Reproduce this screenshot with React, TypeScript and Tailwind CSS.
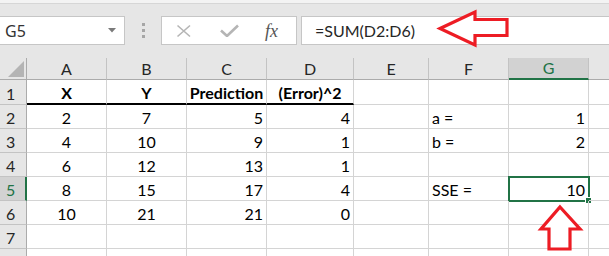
import React from "react";

const cols = ["A", "B", "C", "D", "E", "F", "G", ""];

// value, align per column A..H
type Cell = { v?: string; bold?: boolean };

const align = ["center", "center", "right", "right", "left", "left", "right", "left"];

const rows: Cell[][] = [
  [{ v: "X", bold: true }, { v: "Y", bold: true }, { v: "Prediction", bold: true }, { v: "(Error)^2", bold: true }, {}, {}, {}, {}],
  [{ v: "2" }, { v: "7" }, { v: "5" }, { v: "4" }, {}, { v: "a =" }, { v: "1" }, {}],
  [{ v: "4" }, { v: "10" }, { v: "9" }, { v: "1" }, {}, { v: "b =" }, { v: "2" }, {}],
  [{ v: "6" }, { v: "12" }, { v: "13" }, { v: "1" }, {}, {}, {}, {}],
  [{ v: "8" }, { v: "15" }, { v: "17" }, { v: "4" }, {}, { v: "SSE =" }, { v: "10" }, {}],
  [{ v: "10" }, { v: "21" }, { v: "21" }, { v: "0" }, {}, {}, {}, {}],
  [{}, {}, {}, {}, {}, {}, {}, {}],
  [{}, {}, {}, {}, {}, {}, {}, {}],
];

function FormulaBar() {
  return (
    <>
      <div className="h-[4px] bg-[#f3f3f3] border-b border-[#d6d6d6]" />
      <div className="flex h-[54px] items-start bg-[#e6e6e6] pt-[12px]">
        <div className="flex h-[29px] w-[125px] items-center justify-between border border-l-0 border-[#c6c6c6] bg-white pl-[5px] pr-[8px]">
          <span className="font-['Noto_Sans',sans-serif] text-[16px] text-[#333]">G5</span>
          <svg width="8" height="5" viewBox="0 0 8 5">
            <path d="M0 0h8L4 4.5z" fill="#7a7a7a" />
          </svg>
        </div>
        <div className="ml-[17px] flex h-[29px] flex-col items-center justify-center gap-[3px]">
          <span className="h-[3px] w-[3px] bg-[#a6a6a6]" />
          <span className="h-[3px] w-[3px] bg-[#a6a6a6]" />
          <span className="h-[3px] w-[3px] bg-[#a6a6a6]" />
        </div>
        <div className="ml-[16px] flex h-[29px] w-[136px] items-center border border-[#c6c6c6] bg-white">
          <svg className="ml-[14px]" width="16" height="14" viewBox="0 0 16 14">
            <path d="M1.5 1.5l12.5 11M14 1.5L1.5 12.5" stroke="#b5b5b5" strokeWidth="1.6" fill="none" />
          </svg>
          <svg className="ml-[28px]" width="19" height="13" viewBox="0 0 19 13">
            <path d="M1 6.5l6 5.5L18 1.5" stroke="#b5b5b5" strokeWidth="2.6" fill="none" />
          </svg>
          <span className="ml-[26px] font-['Liberation_Serif',serif] text-[18px] italic leading-none text-[#555]">
            fx
          </span>
        </div>
        <div className="ml-[4px] flex h-[29px] flex-1 items-center border border-r-0 border-[#c6c6c6] bg-white pl-[13px]">
          <span className="text-[16px] text-[#262626]">=SUM(D2:D6)</span>
        </div>
      </div>
    </>
  );
}

function Sheet() {
  return (
    <div className="grid grid-cols-[27px_80px_80px_80px_87px_75px_80px_80px_80px] grid-rows-[22px_25px_24px_24px_24px_24px_24px_24px_24px] text-[16px]">
      {/* corner */}
      <div className="flex items-end justify-end border-b border-r border-[#ababab] bg-[#e6e6e6] pb-[2px] pr-[2px]">
        <svg width="16" height="16" viewBox="0 0 16 16">
          <path d="M16 0V16H0z" fill="#b4b4b4" />
        </svg>
      </div>
      {cols.map((c, i) => {
        const active = c === "G";
        return (
          <div
            key={i}
            className={
              active
                ? "flex items-center justify-center border-b-2 border-r border-b-[#217346] border-r-[#c3c3c3] bg-[#d2d2d2] leading-[20px] text-[#217346]"
                : "flex items-center justify-center border-b border-r border-b-[#ababab] border-r-[#c3c3c3] bg-[#e6e6e6] leading-[20px] text-[#262626]"
            }
          >
            {c}
          </div>
        );
      })}

      {rows.map((row, ri) => {
        const n = ri + 1;
        const activeRow = n === 5;
        return (
          <React.Fragment key={n}>
            <div
              className={
                activeRow
                  ? "flex items-end border-b border-r-2 border-b-[#c3c3c3] border-r-[#217346] bg-[#d2d2d2] pl-[6px] leading-[20px] text-[#217346]"
                  : "flex items-end border-b border-r border-b-[#c3c3c3] border-r-[#ababab] bg-[#e6e6e6] pl-[6px] leading-[20px] text-[#262626]"
              }
            >
              {n < 8 ? n : ""}
            </div>
            {row.map((cell, ci) => {
              const a = align[ci];
              const header = n === 1 && ci < 4;
              const selected = n === 5 && ci === 6;
              return (
                <div
                  key={ci}
                  className={[
                    "relative flex items-end whitespace-nowrap border-r border-r-[#d4d4d4] leading-[20px] text-black",
                    header ? "border-b-2 border-b-black" : "border-b border-b-[#d4d4d4]",
                    cell.bold ? "justify-center font-bold" : "",
                    !cell.bold && a === "center" ? "justify-center" : "",
                    !cell.bold && a === "right" ? "justify-end pr-[3px]" : "",
                    !cell.bold && a === "left" ? "justify-start pl-[3px]" : "",
                  ].join(" ")}
                >
                  {cell.v}
                  {selected && (
                    <>
                      <div className="absolute -bottom-[2px] -left-[1px] -right-[2px] -top-[1px] border-2 border-[#217346]" />
                      <div className="absolute -bottom-[4px] -right-[4px] h-[7px] w-[7px] border border-white bg-[#217346]" />
                    </>
                  )}
                </div>
              );
            })}
          </React.Fragment>
        );
      })}
    </div>
  );
}

export default function App() {
  return (
    <div className="relative h-[256px] w-[609px] overflow-hidden bg-white font-['Lato',sans-serif]">
      <FormulaBar />
      <Sheet />
      {/* red callout arrows */}
      <svg className="pointer-events-none absolute left-0 top-0" width="609" height="256">
        <polygon
          points="440,28.5 475,12 475,19.5 507,19.5 507,35.5 475,35.5 475,45"
          fill="white"
          stroke="#ed1c24"
          strokeWidth="3.2"
        />
        <polygon
          points="560,207 580,229 570,229 570,249 549,249 549,229 541,229"
          fill="white"
          stroke="#ed1c24"
          strokeWidth="3.2"
        />
      </svg>
    </div>
  );
}
